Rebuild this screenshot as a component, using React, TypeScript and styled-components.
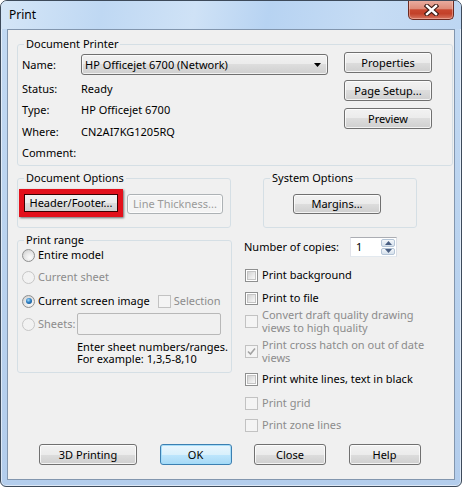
import React from 'react';
import styled, { createGlobalStyle } from 'styled-components';

const FONT = `"Noto Sans", "Open Sans", "DejaVu Sans", sans-serif`;

const Global = createGlobalStyle`
  html, body { margin: 0; padding: 0; background: #ffffff; }
  body { font-family: ${FONT}; font-size: 11px; color: #000; }
  * { box-sizing: border-box; }
`;

const Window = styled.div`
  width: 462px;
  height: 487px;
  border: 1px solid #3d4a5a;
  border-radius: 7px 7px 6px 6px;
  background: linear-gradient(180deg, #c3daf3 0%, #bad3ef 50%, #b3cdec 100%);
  box-shadow: inset 0 0 0 1px rgba(255, 255, 255, 0.55);
  display: flex;
  flex-direction: column;
  overflow: hidden;
  font-family: ${FONT};
  font-size: 11px;
`;

const TitleBar = styled.div`
  height: 28px;
  flex: none;
  display: flex;
  align-items: flex-start;
  justify-content: space-between;
  padding-left: 8px;
  background: linear-gradient(100deg, #d5e6f7 0%, #bfd8f3 22%, #cfe2f6 42%, #b7d3f2 58%, #c6dcf4 80%, #bdd6f2 100%);
`;

const TitleText = styled.span`
  margin-top: 6px;
  font-size: 12px;
  line-height: 16px;
  color: #000;
`;

const CloseButton = styled.div`
  width: 46px;
  height: 20px;
  margin-top: -1px;
  margin-right: 7px;
  border: 1px solid #6b2a21;
  border-top: none;
  border-radius: 0 0 5px 5px;
  background: linear-gradient(180deg, #eab0a3 0%, #de8c79 45%, #c8472f 52%, #c3412a 72%, #d67560 100%);
  box-shadow: inset 0 0 0 1px rgba(255, 210, 200, 0.45);
  display: grid;
  place-items: center;
`;

const Frame = styled.div`
  flex: 1;
  display: flex;
  padding: 0 6px 6px 6px;
`;

const Panel = styled.div`
  flex: 1;
  display: flex;
  flex-direction: column;
  border: 1px solid #8296ae;
  background: #f0f0f0;
  padding: 6px 1px 0 9px;
`;

const Group = styled.fieldset<{ $w?: number }>`
  margin: 0;
  padding: 0;
  min-width: 0;
  border: 1px solid #d5dfe5;
  border-radius: 3px;
  ${(p) => (p.$w ? `width: ${p.$w}px; flex: none;` : '')}
`;

const Legend = styled.legend`
  margin-left: 6px;
  padding: 0 2px;
  font-size: 11px;
  line-height: 16px;
  color: #000;
`;

const PrinterBody = styled.div`
  display: flex;
  align-items: flex-start;
  padding: 0 0 4px 4px;
`;

const InfoGrid = styled.div`
  display: grid;
  grid-template-columns: 59px 247px;
  grid-template-rows: 21px repeat(4, 16px);
  row-gap: 5.5px;
  align-items: center;
  margin-top: 2px;
`;

const Text = styled.span<{ $disabled?: boolean }>`
  line-height: 16px;
  white-space: nowrap;
  color: ${(p) => (p.$disabled ? '#8c8c8c' : '#000')};
`;

const Combo = styled.div`
  height: 21px;
  display: flex;
  align-items: center;
  justify-content: space-between;
  border: 1px solid #707070;
  border-radius: 3px;
  padding: 0 6px 0 3px;
  background: linear-gradient(180deg, #f2f2f2 0%, #ebebeb 50%, #dddddd 50%, #cfcfcf 100%);
  box-shadow: inset 0 0 0 1px rgba(255, 255, 255, 0.7);
`;

const ButtonColumn = styled.div`
  display: flex;
  flex-direction: column;
  gap: 7px;
  margin-left: 16px;
`;

const Button = styled.div<{ $w: number; $h?: number; $variant?: 'normal' | 'primary' | 'disabled' }>`
  width: ${(p) => p.$w}px;
  height: ${(p) => p.$h ?? 21}px;
  flex: none;
  display: flex;
  align-items: center;
  justify-content: center;
  border-radius: 3px;
  white-space: nowrap;
  line-height: 16px;
  border: 1px solid
    ${(p) => (p.$variant === 'primary' ? '#3c7fb1' : p.$variant === 'disabled' ? '#adb2b5' : '#707070')};
  color: ${(p) => (p.$variant === 'disabled' ? '#9a9a9a' : '#000')};
  background: ${(p) =>
    p.$variant === 'primary'
      ? 'linear-gradient(180deg, #eaf6fd 0%, #d9f0fc 50%, #bee6fd 50%, #a7d9f5 100%)'
      : p.$variant === 'disabled'
      ? '#f4f4f4'
      : 'linear-gradient(180deg, #f2f2f2 0%, #ebebeb 50%, #dddddd 50%, #cfcfcf 100%)'};
  box-shadow: inset 0 0 0 1px
    ${(p) => (p.$variant === 'primary' ? 'rgba(160, 220, 250, 0.9)' : 'rgba(255, 255, 255, 0.75)')};
`;

const Highlighted = styled(Button)`
  position: relative;
  margin-top: -1px;
  &::after {
    content: '';
    position: absolute;
    left: -5px;
    top: -5px;
    right: -5px;
    bottom: -5px;
    border: 5px solid #e3101b;
    box-shadow: inset 0 0 0 1px #3a0000, 1px 1px 2px rgba(0, 0, 0, 0.55);
    pointer-events: none;
  }
`;

const OptionsRow = styled.div`
  display: flex;
  align-items: flex-start;
  margin-top: 4px;
`;

const DocOptionsBody = styled.div`
  display: flex;
  align-items: flex-start;
  gap: 8px;
  padding: 8px 0 13px 5px;
`;

const SystemBody = styled.div`
  display: flex;
  justify-content: center;
  padding: 8px 6px 13px 0;
`;

const LowerRow = styled.div`
  display: flex;
  align-items: flex-start;
  margin-top: 4px;
`;

const RangeBody = styled.div`
  display: flex;
  flex-direction: column;
  padding: 0 0 7px 4px;
`;

const RadioRow = styled.div<{ $mt: number; $h?: number }>`
  display: flex;
  align-items: center;
  height: ${(p) => p.$h ?? 16}px;
  margin-top: ${(p) => p.$mt}px;
`;

const Radio = styled.span<{ $checked?: boolean; $disabled?: boolean }>`
  width: 13px;
  height: 13px;
  flex: none;
  border-radius: 50%;
  margin-right: 3px;
  border: 1px solid ${(p) => (p.$disabled ? '#c6c6c6' : '#8e8f8f')};
  background: ${(p) =>
    p.$disabled
      ? '#f2f2f2'
      : 'radial-gradient(circle at 62% 68%, #fbfbfb 0%, #e8e8e8 45%, #c9c9c9 100%)'};
  display: grid;
  place-items: center;
  &::after {
    content: '';
    display: ${(p) => (p.$checked ? 'block' : 'none')};
    width: 6px;
    height: 6px;
    border-radius: 50%;
    background: radial-gradient(circle at 40% 35%, #a6dcfb 0%, #2c7fc3 45%, #0f4479 100%);
  }
`;

const CheckBox = styled.span<{ $disabled?: boolean }>`
  width: 13px;
  height: 13px;
  flex: none;
  position: relative;
  border: 1px solid ${(p) => (p.$disabled ? '#c2c2c2' : '#8e8f8f')};
  background: ${(p) => (p.$disabled ? '#f4f4f4' : '#ffffff')};
  display: grid;
  place-items: center;
  &::before {
    content: '';
    display: ${(p) => (p.$disabled ? 'none' : 'block')};
    position: absolute;
    left: 1px;
    top: 1px;
    right: 1px;
    bottom: 1px;
    border: 1px solid #c4c4c4;
    background: linear-gradient(135deg, #d2d2d2 0%, #e6e6e6 50%, #f8f8f8 100%);
  }
`;

const SheetsLabel = styled(Text)`
  width: 39px;
  flex: none;
`;

const SheetsField = styled.div`
  width: 144px;
  height: 22px;
  border: 1px solid #b8b8b8;
  border-radius: 2px;
  background: #f0f0f0;
`;

const HelpText = styled.div`
  margin-top: 6px;
  padding-left: 55px;
  line-height: 12px;
  white-space: nowrap;
`;

const RightColumn = styled.div`
  flex: 1;
  display: flex;
  flex-direction: column;
  margin-left: 12px;
  margin-top: 5px;
`;

const CopiesRow = styled.div`
  display: flex;
  align-items: center;
  height: 20px;
`;

const CopiesLabel = styled(Text)`
  width: 106px;
  flex: none;
`;

const Spin = styled.div`
  width: 47px;
  height: 20px;
  display: flex;
  border: 1px solid #abadb3;
  border-color: #abadb3 #dbdfe6 #e3e9ef #e2e3ea;
  background: #fff;
`;

const SpinValue = styled.span`
  flex: 1;
  padding-left: 5px;
  line-height: 18px;
`;

const SpinButtons = styled.div`
  width: 16px;
  display: flex;
  flex-direction: column;
  gap: 1px;
  padding: 1px;
`;

const SpinButton = styled.div`
  flex: 1;
  display: grid;
  place-items: center;
  border: 1px solid #b4c4d6;
  border-radius: 2px;
  background: linear-gradient(180deg, #f5f8fb 0%, #e4ebf3 50%, #d6e1ec 100%);
`;

const CheckRow = styled.div<{ $mt: number; $lh?: number }>`
  display: flex;
  align-items: center;
  gap: 4px;
  margin-top: ${(p) => p.$mt}px;
  padding-left: 1px;
  line-height: ${(p) => p.$lh ?? 16}px;
`;

const CheckLabel = styled.span<{ $disabled?: boolean }>`
  white-space: nowrap;
  color: ${(p) => (p.$disabled ? '#8c8c8c' : '#000')};
`;

const BottomRow = styled.div`
  display: flex;
  gap: 22.5px;
  margin-top: 11px;
  padding-left: 22px;
`;

const CloseGlyph = () => (
  <svg width="15" height="12" viewBox="0 0 15 12">
    <path d="M3 2 L12 10 M12 2 L3 10" stroke="#3b1a14" strokeWidth="4.6" strokeLinecap="square" fill="none" />
    <path d="M3 2 L12 10 M12 2 L3 10" stroke="#ffffff" strokeWidth="2.4" strokeLinecap="square" fill="none" />
  </svg>
);

const DownArrow = ({ color = '#000' }: { color?: string }) => (
  <svg width="7" height="4" viewBox="0 0 7 4">
    <path d="M0 0 H7 L3.5 4 Z" fill={color} />
  </svg>
);

const UpArrow = ({ color = '#4a5f82' }: { color?: string }) => (
  <svg width="7" height="4" viewBox="0 0 7 4">
    <path d="M0 4 H7 L3.5 0 Z" fill={color} />
  </svg>
);

const GrayCheck = () => (
  <svg width="9" height="9" viewBox="0 0 9 9">
    <path d="M1 4.5 L3.5 7 L8 1.5" stroke="#a3a3a3" strokeWidth="1.6" fill="none" />
  </svg>
);

type CheckItem = { label: React.ReactNode; mt: number; lh?: number; disabled?: boolean; checked?: boolean };

const checkItems: CheckItem[] = [
  { label: 'Print background', mt: 10 },
  { label: 'Print to file', mt: 7 },
  {
    label: (
      <>
        Convert draft quality drawing
        <br />
        views to high quality
      </>
    ),
    mt: 2,
    lh: 13,
    disabled: true,
  },
  {
    label: (
      <>
        Print cross hatch on out of date
        <br />
        views
      </>
    ),
    mt: 4,
    lh: 13,
    disabled: true,
    checked: true,
  },
  { label: 'Print white lines, text in black', mt: 7 },
  { label: 'Print grid', mt: 8, disabled: true },
  { label: 'Print zone lines', mt: 6, disabled: true },
];

export default function App() {
  return (
    <>
      <Global />
      <Window>
        <TitleBar>
          <TitleText>Print</TitleText>
          <CloseButton>
            <CloseGlyph />
          </CloseButton>
        </TitleBar>
        <Frame>
          <Panel>
            <Group>
              <Legend>Document Printer</Legend>
              <PrinterBody>
                <InfoGrid>
                  <Text>Name:</Text>
                  <Combo>
                    <Text>HP Officejet 6700 (Network)</Text>
                    <DownArrow />
                  </Combo>
                  <Text>Status:</Text>
                  <Text>Ready</Text>
                  <Text>Type:</Text>
                  <Text>HP Officejet 6700</Text>
                  <Text>Where:</Text>
                  <Text>CN2AI7KG1205RQ</Text>
                  <Text>Comment:</Text>
                  <Text />
                </InfoGrid>
                <ButtonColumn>
                  <Button $w={88}>Properties</Button>
                  <Button $w={88}>Page Setup...</Button>
                  <Button $w={88}>Preview</Button>
                </ButtonColumn>
              </PrinterBody>
            </Group>

            <OptionsRow>
              <Group $w={214}>
                <Legend>Document Options</Legend>
                <DocOptionsBody>
                  <Highlighted $w={96} $h={20}>
                    Header/Footer...
                  </Highlighted>
                  <Button $w={96} $h={20} $variant="disabled">
                    Line Thickness...
                  </Button>
                </DocOptionsBody>
              </Group>
              <Group $w={154} style={{ marginLeft: 32 }}>
                <Legend>System Options</Legend>
                <SystemBody>
                  <Button $w={88} $h={20}>
                    Margins...
                  </Button>
                </SystemBody>
              </Group>
            </OptionsRow>

            <LowerRow>
              <Group $w={215}>
                <Legend>Print range</Legend>
                <RangeBody>
                  <RadioRow $mt={-1}>
                    <Radio />
                    <Text>Entire model</Text>
                  </RadioRow>
                  <RadioRow $mt={6}>
                    <Radio $disabled />
                    <Text $disabled>Current sheet</Text>
                  </RadioRow>
                  <RadioRow $mt={8}>
                    <Radio $checked />
                    <Text>Current screen image</Text>
                    <CheckBox $disabled style={{ marginLeft: 8, marginRight: 3 }} />
                    <Text $disabled>Selection</Text>
                  </RadioRow>
                  <RadioRow $mt={4} $h={22}>
                    <Radio $disabled />
                    <SheetsLabel $disabled>Sheets:</SheetsLabel>
                    <SheetsField />
                  </RadioRow>
                  <HelpText>
                    Enter sheet numbers/ranges.
                    <br />
                    For example: 1,3,5-8,10
                  </HelpText>
                </RangeBody>
              </Group>

              <RightColumn>
                <CopiesRow>
                  <CopiesLabel>Number of copies:</CopiesLabel>
                  <Spin>
                    <SpinValue>1</SpinValue>
                    <SpinButtons>
                      <SpinButton>
                        <UpArrow />
                      </SpinButton>
                      <SpinButton>
                        <DownArrow color="#4a5f82" />
                      </SpinButton>
                    </SpinButtons>
                  </Spin>
                </CopiesRow>
                {checkItems.map((item, i) => (
                  <CheckRow key={i} $mt={item.mt} $lh={item.lh}>
                    <CheckBox $disabled={item.disabled}>{item.checked && <GrayCheck />}</CheckBox>
                    <CheckLabel $disabled={item.disabled}>{item.label}</CheckLabel>
                  </CheckRow>
                ))}
              </RightColumn>
            </LowerRow>

            <BottomRow>
              <Button $w={98}>3D Printing</Button>
              <Button $w={72} $variant="primary">
                OK
              </Button>
              <Button $w={72}>Close</Button>
              <Button $w={72}>Help</Button>
            </BottomRow>
          </Panel>
        </Frame>
      </Window>
    </>
  );
}
